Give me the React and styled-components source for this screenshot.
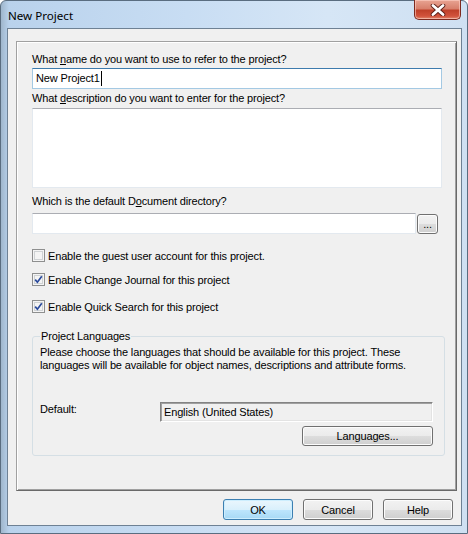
import React from "react";
import styled, { createGlobalStyle } from "styled-components";

const GlobalStyle = createGlobalStyle`
  html, body {
    margin: 0;
    padding: 0;
    background: #ffffff;
  }
  * {
    box-sizing: border-box;
  }
`;

const Window = styled.div`
  width: 468px;
  height: 534px;
  display: flex;
  flex-direction: column;
  border-radius: 6px 6px 0 0;
  border: 1px solid #5a6d80;
  background: linear-gradient(
    to right,
    #9fb6cc 0px,
    #b9d2ec 8px,
    #c8ddf3 40%,
    #d6e6f6 70%,
    #cfe0f2 100%
  );
  font-family: "Liberation Sans", Arial, sans-serif;
  font-size: 11px;
  letter-spacing: -0.15px;
  color: #000;
`;

const TitleBar = styled.div`
  height: 27px;
  display: flex;
  align-items: flex-start;
`;

const Title = styled.div`
  padding: 7px 0 0 7px;
  font-family: "Noto Sans", "Open Sans", sans-serif;
  font-size: 11.6px;
  letter-spacing: 0;
  line-height: 16px;
  color: #000;
`;

const CloseButton = styled.div`
  margin-left: auto;
  margin-right: 6px;
  margin-top: -1px;
  width: 47px;
  height: 20px;
  border: 1px solid #7d2a1f;
  border-top: none;
  border-radius: 0 0 5px 5px;
  background: linear-gradient(
    to bottom,
    #e8a493 0%,
    #d8806c 45%,
    #c0412a 55%,
    #d2533c 85%,
    #e08a6f 100%
  );
  box-shadow: inset 0 0 0 1px rgba(255, 210, 200, 0.6);
  display: flex;
  align-items: center;
  justify-content: center;
`;

const Client = styled.div`
  margin: 0 5px 0 6px;
  width: 455px;
  height: 498px;
  border: 1px solid #6e8194;
  background: #f0f0f0;
  display: flex;
  flex-direction: column;
`;

const Panel = styled.div`
  margin: 12px 0 0 8px;
  width: 441px;
  height: 450px;
  border-top: 1px solid #a0a0a0;
  border-left: 1px solid #a0a0a0;
  border-right: 1px solid #696969;
  border-bottom: 1px solid #696969;
  box-shadow: inset 1px 1px 0 #ffffff, inset -1px -1px 0 #a0a0a0;
  padding: 0 14px 0 15px;
  display: flex;
  flex-direction: column;
`;

const Label = styled.div`
  margin-top: ${(p) => p.$top}px;
  height: 14px;
  line-height: 11px;
  white-space: nowrap;
`;

const TextBox = styled.div`
  margin-top: ${(p) => p.$top || 0}px;
  height: ${(p) => p.$height}px;
  flex: ${(p) => (p.$grow ? 1 : "none")};
  background: #ffffff;
  border: 1px solid ${(p) => (p.$focused ? "#a4c9e3" : "#e3e9ef")};
  border-top-color: ${(p) => (p.$focused ? "#3d7bad" : "#abadb3")};
  padding: 2px 3px;
  line-height: 14px;
  display: flex;
  align-items: flex-start;
`;

const Caret = styled.span`
  display: inline-block;
  width: 1px;
  height: 15px;
  background: #000;
  margin-left: 1px;
`;

const DirRow = styled.div`
  margin-top: 3px;
  display: flex;
  gap: 1px;
  align-items: flex-start;
`;

const Button = styled.div`
  width: ${(p) => p.$width}px;
  height: ${(p) => p.$height || 21}px;
  margin-top: ${(p) => p.$top || 0}px;
  border: 1px solid ${(p) => (p.$default ? "#3c7fb1" : "#707070")};
  border-radius: 3px;
  background: ${(p) =>
    p.$default
      ? "linear-gradient(to bottom, #eaf6fd 0%, #d9f0fc 50%, #bee6fd 51%, #a7d9f5 100%)"
      : "linear-gradient(to bottom, #f2f2f2 0%, #ebebeb 50%, #dddddd 51%, #cfcfcf 100%)"};
  box-shadow: inset 0 0 0 1px ${(p) => (p.$default ? "#cdeefe" : "#fcfcfc")};
  display: flex;
  align-items: center;
  justify-content: center;
  line-height: 14px;
  color: #000;
`;

const CheckRow = styled.div`
  margin-top: ${(p) => p.$top}px;
  height: 13px;
  display: flex;
  align-items: center;
  gap: 3px;
  white-space: nowrap;
`;

const CheckBox = styled.span`
  width: 13px;
  height: 13px;
  border: 1px solid #8e8f8f;
  background: #f4f4f4;
  box-shadow: inset 0 0 0 1px #f4f4f4, inset 0 0 0 2px #cfd2d4;
  display: flex;
  align-items: center;
  justify-content: center;
`;

const GroupBox = styled.fieldset`
  margin: 16px 0 0 0;
  width: 413px;
  border: 1px solid #d5dfe5;
  border-radius: 3px;
  padding: 0 11px 9px 7px;
  display: flex;
  flex-direction: column;
`;

const Legend = styled.legend`
  padding: 0 1px;
  line-height: 14px;
  height: 14px;
`;

const Paragraph = styled.div`
  margin-top: 3px;
  line-height: 13px;
  width: 372px;
`;

const DefaultRow = styled.div`
  margin-top: 30px;
  display: flex;
  align-items: flex-start;
`;

const DefaultLabel = styled.div`
  width: 120px;
  line-height: 14px;
`;

const ReadOnlyField = styled.div`
  flex: 1;
  height: 20px;
  background: #f0f0f0;
  border-top: 1px solid #838383;
  border-left: 1px solid #838383;
  border-right: 1px solid #ffffff;
  border-bottom: 1px solid #ffffff;
  box-shadow: inset 1px 1px 0 #a0a0a0, inset -1px -1px 0 #e3e3e3;
  padding: 2px 3px;
  line-height: 14px;
`;

const RightAlign = styled.div`
  display: flex;
  justify-content: flex-end;
`;

const ButtonRow = styled.div`
  margin-top: 8px;
  padding-right: 8px;
  display: flex;
  justify-content: flex-end;
  gap: 10px;
`;

function CheckMark() {
  return (
    <svg width="9" height="9" viewBox="0 0 9 9">
      <path
        d="M1.2 4.6 L3.4 7.2 L7.8 1.2"
        fill="none"
        stroke="#2a4a9c"
        strokeWidth="1.7"
      />
    </svg>
  );
}

function CloseGlyph() {
  return (
    <svg width="16" height="12" viewBox="0 0 16 12">
      <path
        d="M3 1.5 L13 10.5 M13 1.5 L3 10.5"
        stroke="#5b1f17"
        strokeWidth="4.6"
        strokeLinecap="round"
      />
      <path
        d="M3 1.5 L13 10.5 M13 1.5 L3 10.5"
        stroke="#ffffff"
        strokeWidth="2.8"
        strokeLinecap="round"
      />
    </svg>
  );
}

function Check({ checked, top, children }) {
  return (
    <CheckRow $top={top}>
      <CheckBox>{checked ? <CheckMark /> : null}</CheckBox>
      <span>{children}</span>
    </CheckRow>
  );
}

export default function App() {
  return (
    <>
      <GlobalStyle />
      <Window>
        <TitleBar>
          <Title>New Project</Title>
          <CloseButton>
            <CloseGlyph />
          </CloseButton>
        </TitleBar>
        <Client>
          <Panel>
            <Label $top={12}>
              What <u>n</u>ame do you want to use to refer to the project?
            </Label>
            <TextBox $height={21} $focused>
              New Project1
              <Caret />
            </TextBox>
            <Label $top={4}>
              What <u>d</u>escription do you want to enter for the project?
            </Label>
            <TextBox $top={1} $height={80} />
            <Label $top={8}>
              Which is the default D<u>o</u>cument directory?
            </Label>
            <DirRow>
              <TextBox $height={21} $grow />
              <Button $width={21} $height={20} $top={1}>
                ...
              </Button>
              <div style={{ width: 3 }} />
            </DirRow>
            <Check top={15}>Enable the guest user account for this project.</Check>
            <Check top={11} checked>
              Enable Change Journal for this project
            </Check>
            <Check top={14} checked>
              Enable Quick Search for this project
            </Check>
            <GroupBox>
              <Legend>Project Languages</Legend>
              <Paragraph>
                Please choose the languages that should be available for this
                project. These languages will be available for object names,
                descriptions and attribute forms.
              </Paragraph>
              <DefaultRow>
                <DefaultLabel>Default:</DefaultLabel>
                <ReadOnlyField>English (United States)</ReadOnlyField>
              </DefaultRow>
              <RightAlign>
                <Button $width={131} $height={20} $top={4}>
                  Languages...
                </Button>
              </RightAlign>
            </GroupBox>
          </Panel>
          <ButtonRow>
            <Button $width={70} $default>
              OK
            </Button>
            <Button $width={70}>Cancel</Button>
            <Button $width={70}>Help</Button>
          </ButtonRow>
        </Client>
      </Window>
    </>
  );
}
